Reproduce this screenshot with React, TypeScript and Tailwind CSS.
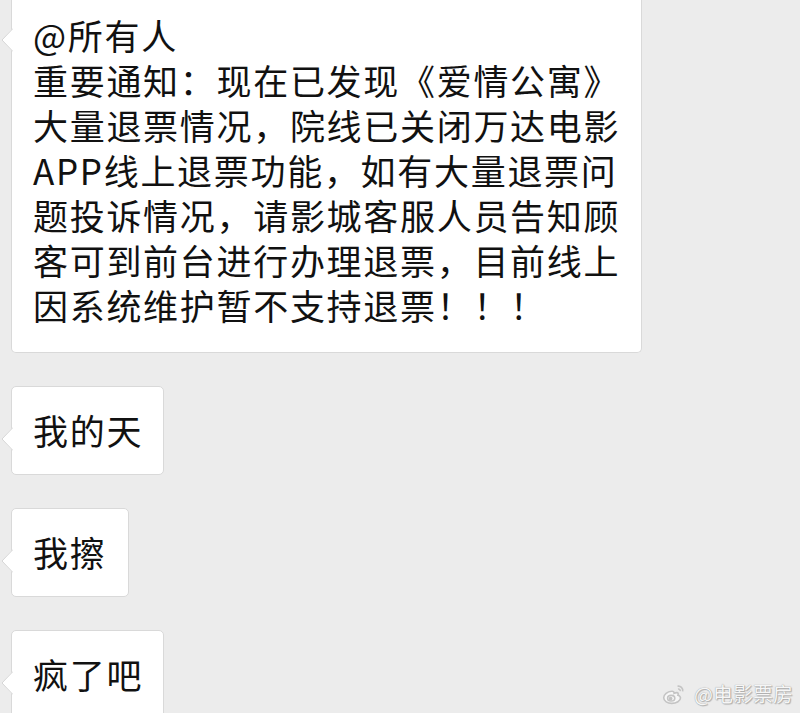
import React from "react";

function Tail({ top }: { top: number }) {
  return (
    <svg
      className="absolute left-[-11px]"
      style={{ top }}
      width="12"
      height="24"
      viewBox="0 0 12 24"
    >
      <path d="M12 0 L1 12 L12 24 Z" fill="#ffffff" />
      <path d="M12 0.5 L1 12 L12 23.5" fill="none" stroke="#d6d6d6" strokeWidth="1" />
    </svg>
  );
}

function WeiboLogo() {
  return (
    <svg width="24" height="22" viewBox="0 0 24 22">
      <g fill="none" stroke="#c4c4c4" strokeWidth="1.6">
        <path d="M9.5 8.2c-4 .3-7.8 3-7.8 6.6 0 3.4 3.9 5.6 8 5.6 4.8 0 8.8-2.6 8.8-5.4 0-2-2-2.6-2.6-2.8.5-1.2.6-2.6-1.2-2.6-1 0-2.2.6-2.6.8.1-1.3-.6-2.4-2.6-2.2z" fill="#f7f7f7" />
        <ellipse cx="9.2" cy="15.2" rx="3.6" ry="2.8" />
        <circle cx="8.6" cy="15.6" r="1.1" fill="#c4c4c4" />
        <path d="M15.5 3.2c3-.6 5.8 2 5.2 5.2" />
        <path d="M16 6c1.3-.2 2.4.9 2.2 2.2" />
      </g>
    </svg>
  );
}

const lines = [
  "@所有人",
  "重要通知：现在已发现《爱情公寓》",
  "大量退票情况，院线已关闭万达电影",
  "APP线上退票功能，如有大量退票问",
  "题投诉情况，请影城客服人员告知顾",
  "客可到前台进行办理退票，目前线上",
  "因系统维护暂不支持退票！！！",
];

export default function App() {
  return (
    <div
      className="relative w-[800px] h-[713px] overflow-hidden bg-[#ececec] text-[#111111] text-[35px] leading-[45px] tracking-[1.7px]"
      style={{ fontFamily: '"Noto Sans CJK SC", "Noto Sans", sans-serif' }}
    >
      <div className="flex flex-col items-start gap-[33px] pl-[11px]">
        <div className="relative w-[631px] h-[353px] bg-white border border-t-0 border-[#d9d9d9] rounded-b-[5px] pt-[12px] pl-[21px] whitespace-nowrap">
          <Tail top={28} />
          {lines.map((l, i) => (
            <div key={i}>{l}</div>
          ))}
        </div>
        <div className="relative w-[153px] h-[89px] bg-white border border-[#d9d9d9] rounded-[5px] pl-[21px] pt-[20px] whitespace-nowrap">
          <Tail top={40} />
          <div>我的天</div>
        </div>
        <div className="relative w-[118px] h-[89px] bg-white border border-[#d9d9d9] rounded-[5px] pl-[21px] pt-[20px] whitespace-nowrap">
          <Tail top={40} />
          <div>我擦</div>
        </div>
        <div className="relative w-[153px] h-[89px] bg-white border border-[#d9d9d9] rounded-[5px] pl-[21px] pt-[20px] whitespace-nowrap">
          <Tail top={40} />
          <div>疯了吧</div>
        </div>
      </div>
      <div className="absolute right-[7px] bottom-[8px] flex items-center gap-[8px] tracking-normal">
        <WeiboLogo />
        <span
          className="text-[20px] leading-[22px] text-[#f6f6f6]"
          style={{ textShadow: "0 0 1px #8a8a8a, 1px 1px 1px rgba(0,0,0,0.25)" }}
        >
          @电影票房
        </span>
      </div>
    </div>
  );
}
